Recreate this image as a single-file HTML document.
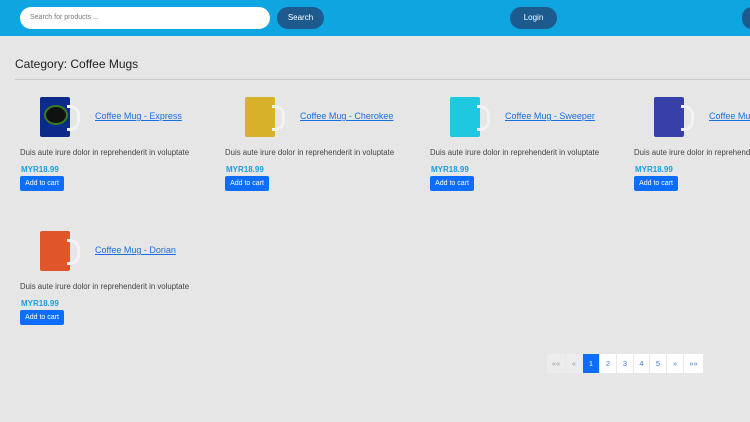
<!DOCTYPE html>
<html><head><style>
html,body{margin:0;width:750px;height:422px;overflow:hidden}
body{background:#e6e6e6;font-family:"Liberation Sans",sans-serif;position:relative}
.wrap{position:absolute;left:0;top:0;width:750px;height:422px;overflow:hidden}
.hdr{position:absolute;left:0;top:0;width:750px;height:36px;background:#0ea5e0}
.search{position:absolute;left:20px;top:7px;width:250px;height:22px;border-radius:11px;background:#fff;font-size:7px;color:#777;line-height:22px;box-sizing:border-box;padding-left:10px}
.btn{position:absolute;background:#1d5a8e;color:#fff;font-size:8px;text-align:center;border-radius:11px}
h1{position:absolute;left:15px;top:57px;margin:0;font-size:12px;font-weight:normal;color:#222}
.hr{position:absolute;left:15px;top:79px;width:735px;height:1px;background:#c8c8c8}
.card{position:absolute;width:200px;height:110px}
.mug{position:absolute;left:20px;top:2px;width:30px;height:40px;border-radius:2px}
.handle{position:absolute;left:47px;top:10px;width:10px;height:20px;border:3px solid #f2f2f2;border-left:none;border-radius:0 10px 10px 0}
.t{position:absolute;left:75px;top:16px;font-size:9px;color:#1a6fe0;text-decoration:underline;white-space:nowrap}
.d{position:absolute;left:0;top:53px;font-size:7.8px;color:#444;white-space:nowrap}
.p{position:absolute;left:1px;top:70px;font-size:8px;font-weight:bold;color:#1a9ee0}
.a{position:absolute;left:0;top:81px;width:44px;height:15px;background:#0d6efd;color:#fff;font-size:7px;line-height:15px;text-align:center;border-radius:2px}
.pg{position:absolute;top:354px;height:19px;font-size:7.5px;line-height:19px;text-align:center;color:#3a7bd5;background:#fff;border-right:1px solid #e8e8e8;box-sizing:border-box}
</style></head><body><div class="wrap">
<div class="hdr"></div>
<div class="search">Search for products ...</div>
<div class="btn" style="left:277px;top:7px;width:47px;height:22px;line-height:22px">Search</div>
<div class="btn" style="left:510px;top:7px;width:47px;height:22px;line-height:22px">Login</div>
<div class="btn" style="left:742px;top:7px;width:20px;height:22px"></div>
<h1>Category: Coffee Mugs</h1>
<div class="hr"></div>

<div class="card" style="left:20px;top:95px"><div class="mug" style="background:#0c2a8a"><div style="margin:10px 6px;width:20px;height:16px;background:#111;border-radius:50%;box-shadow:0 0 0 2px #3a7a20"></div></div><div class="handle"></div><a class="t">Coffee Mug - Express</a><div class="d">Duis aute irure dolor in reprehenderit in voluptate</div><div class="p">MYR18.99</div><div class="a">Add to cart</div></div>
<div class="card" style="left:225px;top:95px"><div class="mug" style="background:#d8b12a"></div><div class="handle"></div><a class="t">Coffee Mug - Cherokee</a><div class="d">Duis aute irure dolor in reprehenderit in voluptate</div><div class="p">MYR18.99</div><div class="a">Add to cart</div></div>
<div class="card" style="left:430px;top:95px"><div class="mug" style="background:#1ec8de"></div><div class="handle"></div><a class="t">Coffee Mug - Sweeper</a><div class="d">Duis aute irure dolor in reprehenderit in voluptate</div><div class="p">MYR18.99</div><div class="a">Add to cart</div></div>
<div class="card" style="left:634px;top:95px;width:116px;overflow:hidden"><div class="mug" style="background:#3540a8"></div><div class="handle"></div><a class="t">Coffee Mug - Geometry</a><div class="d">Duis aute irure dolor in reprehenderit in voluptate</div><div class="p">MYR18.99</div><div class="a">Add to cart</div></div>
<div class="card" style="left:20px;top:229px"><div class="mug" style="background:#e0562a"></div><div class="handle"></div><a class="t">Coffee Mug - Dorian</a><div class="d">Duis aute irure dolor in reprehenderit in voluptate</div><div class="p">MYR18.99</div><div class="a">Add to cart</div></div>

<div class="pg" style="left:547px;width:19px;background:#ececec;color:#999">««</div>
<div class="pg" style="left:566px;width:17px;background:#ececec;color:#999">«</div>
<div class="pg" style="left:583px;width:17px;background:#0d6efd;color:#fff">1</div>
<div class="pg" style="left:600px;width:17px">2</div>
<div class="pg" style="left:617px;width:17px">3</div>
<div class="pg" style="left:634px;width:16px">4</div>
<div class="pg" style="left:650px;width:17px">5</div>
<div class="pg" style="left:667px;width:17px">»</div>
<div class="pg" style="left:684px;width:20px">»»</div>
</div></body></html>
